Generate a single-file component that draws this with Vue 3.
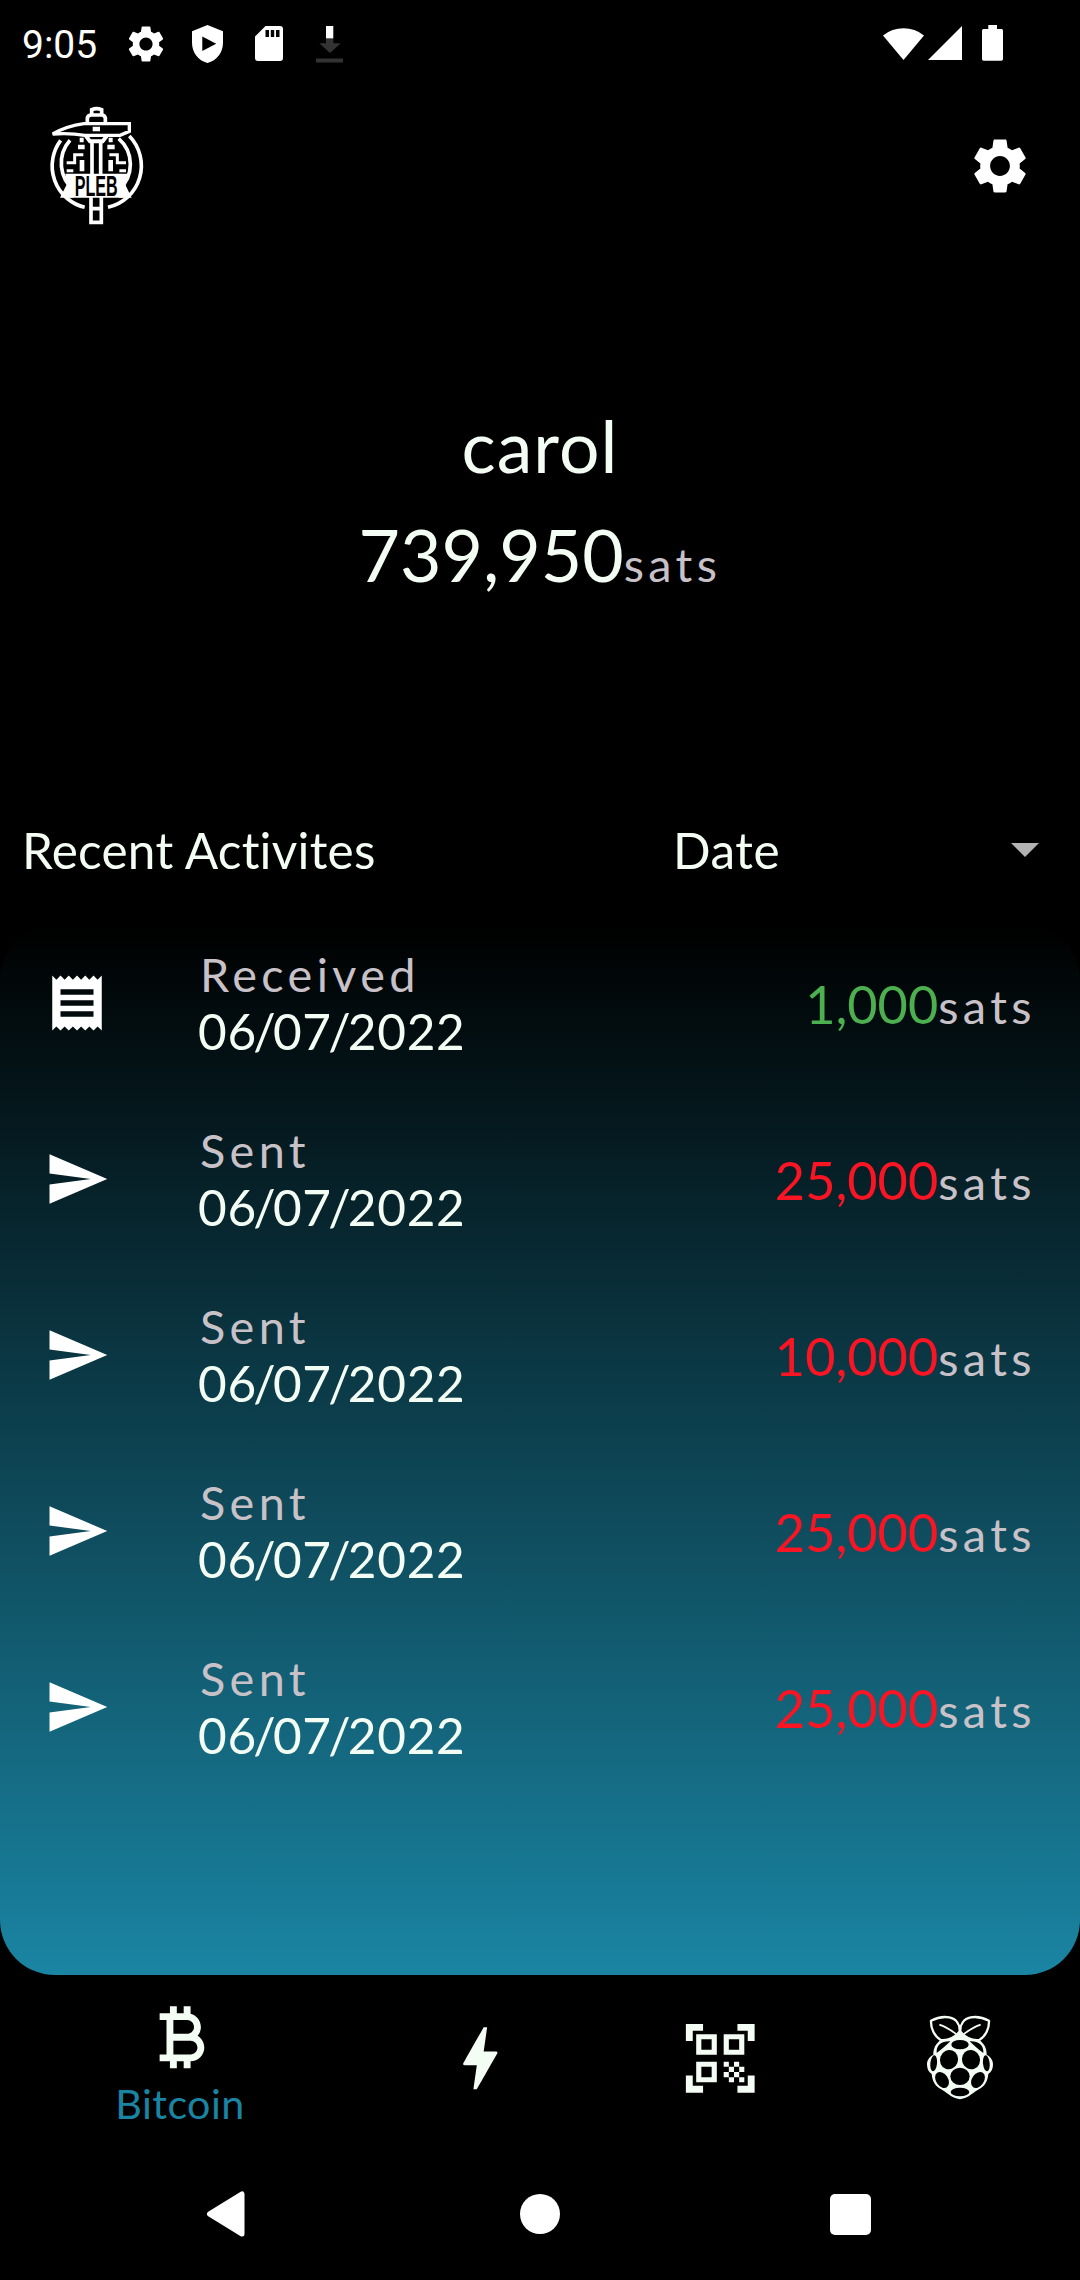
<script setup>
const activities = [
  { type: 'Received', date: ['06', '07', '2022'], amount: '1,000' },
  { type: 'Sent', date: ['06', '07', '2022'], amount: '25,000' },
  { type: 'Sent', date: ['06', '07', '2022'], amount: '10,000' },
  { type: 'Sent', date: ['06', '07', '2022'], amount: '25,000' },
  { type: 'Sent', date: ['06', '07', '2022'], amount: '25,000' },
]

const gear =
  'M19.14 12.94c.04-.3.06-.61.06-.94 0-.32-.02-.64-.07-.94l2.03-1.58c.18-.14.23-.41.12-.61l-1.92-3.32c-.12-.22-.37-.29-.59-.22l-2.39.96c-.5-.38-1.03-.7-1.62-.94l-.36-2.54c-.04-.24-.24-.41-.48-.41h-3.84c-.24 0-.43.17-.47.41l-.36 2.54c-.59.24-1.13.57-1.62.94l-2.39-.96c-.22-.08-.47 0-.59.22L2.74 8.87c-.12.21-.08.47.12.61l2.03 1.58c-.05.3-.09.63-.09.94s.02.64.07.94l-2.03 1.58c-.18.14-.23.41-.12.61l1.92 3.32c.12.22.37.29.59.22l2.39-.96c.5.38 1.03.7 1.62.94l.36 2.54c.05.24.24.41.48.41h3.84c.24 0 .44-.17.47-.41l.36-2.54c.59-.24 1.13-.56 1.62-.94l2.39.96c.22.08.47 0 .59-.22l1.92-3.32c.12-.22.07-.47-.12-.61l-2.01-1.58zM12 15.6c-1.98 0-3.6-1.62-3.6-3.6s1.62-3.6 3.6-3.6 3.6 1.62 3.6 3.6-1.62 3.6-3.6 3.6z'
</script>

<template>
  <div class="phone">
    <div class="status">
      <span class="clock">9:05</span>
      <svg class="st-gear" viewBox="0 0 24 24"><path :d="gear" /></svg>
      <svg class="st-shield" viewBox="0 0 31 38">
        <path fill-rule="evenodd" d="M15.5 0 31 6.3V17.5C31 27.5 25 35.5 15.5 38 6 35.5 0 27.5 0 17.5V6.3ZM10.3 11.5V26L24.2 18.8Z" />
      </svg>
      <svg class="st-sd" viewBox="0 0 28 35">
        <path fill-rule="evenodd" d="M10.5 0H25a3 3 0 0 1 3 3V32a3 3 0 0 1-3 3H3a3 3 0 0 1-3-3V10.5ZM10.5 4V11H14V4ZM15.8 4V11H19.2V4ZM21 4V11H24.5V4Z" />
      </svg>
      <svg class="st-down" viewBox="0 0 27 37">
        <path fill="#333" d="M10 12H17.3V17.3H24.7L14 27 3.3 17.3H10ZM0 32.5H27V36.5H0Z" />
        <path d="M10 0H17.3V12.3H10Z" />
      </svg>
      <span class="grow"></span>
      <svg class="st-wifi" viewBox="0 0 41 34"><path d="M0 9.5A33 33 0 0 1 41 9.5L20.5 34Z" /></svg>
      <svg class="st-cell" viewBox="0 0 34 34"><path d="M0 34H34V0Z" /></svg>
      <svg class="st-batt" viewBox="0 0 21 36">
        <path d="M6.3 0H15V4H19.5A1.5 1.5 0 0 1 21 5.5V34A1.7 1.7 0 0 1 19.3 35.7H1.7A1.7 1.7 0 0 1 0 34V5.5A1.5 1.5 0 0 1 1.5 4H6.3Z" />
      </svg>
    </div>

    <header class="header">
      <svg class="logo" viewBox="0 0 330 390">
        <g fill="none" stroke="#fff" stroke-width="11">
          <path d="M62 121A128 128 0 0 0 134 322" />
          <path d="M268 108A128 128 0 0 1 204 322" />
          <path d="M90 121A104 104 0 0 0 104 272" />
          <path d="M236 116A102 102 0 0 1 236 270" />
          <path d="M155 44V29Q170 23 185 29V44" />
          <path d="M142 66V54Q144 45 154 45H184Q194 45 196 54V66" />
          <path d="M38 102Q80 78 132 71H268V94L240 106H134Q90 98 38 102Z" stroke-width="10" />
          <path d="M138 108L150 124H188L200 108" stroke-width="12" />
          <path d="M156 126V228M182 126V228" />
          <path d="M153 290V367H184V290M153 326H184" />
          <path d="M130 164H104V188H80M80 212H100" stroke-width="9" />
          <path d="M208 164H232V188H258M258 212H238" stroke-width="9" />
          <path d="M126 180V214M212 180V214" stroke-width="14" />
          <path d="M114 141H134M202 141H224" stroke-width="13" />
          <path d="M119 120H131M206 120H218M158 87H180" stroke-width="13" />
        </g>
        <path fill="#fff" d="M76 221H262L250 293H88Z" />
        <path fill="#fff" d="M84 246L100 293H60ZM252 246L236 293H275Z" />
        <text transform="translate(104 289) scale(.62 1)" textLength="208" lengthAdjust="spacingAndGlyphs">PLEB</text>
      </svg>
      <svg class="settings" viewBox="0 0 24 24"><path :d="gear" /></svg>
    </header>

    <section class="account">
      <div class="name">carol</div>
      <div class="balance"><span>739,950</span><span class="unit">sats</span></div>
    </section>

    <div class="list-head">
      <span class="title">Recent Activites</span>
      <span class="sort">Date</span>
      <svg class="caret" viewBox="0 0 28 14"><path d="M0 0H28L14 14Z" /></svg>
    </div>

    <section class="panel">
      <div v-for="(item, i) in activities" :key="i" class="row">
        <svg class="row-icon" viewBox="0 0 24 24">
          <path v-if="item.type === 'Received'" d="M18 17H6v-2h12v2zm0-4H6v-2h12v2zm0-4H6V7h12v2zM3 22l1.5-1.5L6 22l1.5-1.5L9 22l1.5-1.5L12 22l1.5-1.5L15 22l1.5-1.5L18 22l1.5-1.5L21 22V2l-1.5 1.5L18 2l-1.5 1.5L15 2l-1.5 1.5L12 2l-1.5 1.5L9 2 7.5 3.5 6 2 4.5 3.5 3 2v20z" />
          <path v-else d="M2.01 21L23 12 2.01 3 2 10l15 2-15 2z" />
        </svg>
        <div class="info">
          <div class="type">{{ item.type }}</div>
          <div class="date">{{ item.date[0] }}<span class="slash">/</span>{{ item.date[1] }}<span class="slash">/</span>{{ item.date[2] }}</div>
        </div>
        <div class="amount" :class="item.type === 'Received' ? 'in' : 'out'">
          <span>{{ item.amount }}</span><span class="unit">sats</span>
        </div>
      </div>
    </section>

    <nav class="tabs">
      <div class="tab active">
        <svg viewBox="0 0 24 24">
          <path d="M17.06 11.57C17.65 10.88 18 9.98 18 9c0-1.86-1.27-3.43-3-3.87V3h-2v2h-2V3H9v2H6v2h2v10H6v2h3v2h2v-2h2v2h2v-2c2.21 0 4-1.79 4-4 0-1.45-.78-2.73-1.94-3.43zM10 7h4c1.1 0 2 .9 2 2s-.9 2-2 2h-4V7zm5 10h-5v-4h5c1.1 0 2 .9 2 2s-.9 2-2 2z" />
        </svg>
        <span>Bitcoin</span>
      </div>
      <div class="tab">
        <svg viewBox="0 0 24 24">
          <path d="M11 21h-1l1-7H7.5c-.58 0-.57-.32-.38-.66.19-.34.05-.08.07-.12C8.48 10.94 10.42 7.54 13 3h1l-1 7h3.5c.49 0 .56.33.47.51l-.07.15C12.96 17.55 11 21 11 21z" />
        </svg>
      </div>
      <div class="tab">
        <svg viewBox="0 0 24 24">
          <path fill-rule="evenodd" d="M5 5h6v6H5zM6.5 6.5v3h3v-3zM5 13h6v6H5zM6.5 14.5v3h3v-3zM13 5h6v6h-6zM14.5 6.5v3h3v-3zM13 13h1.5v1.5H13zM14.5 14.5H16V16h-1.5zM16 13h1.5v1.5H16zM13 16h1.5v1.5H13zM14.5 17.5H16V19h-1.5zM16 16h1.5v1.5H16zM17.5 14.5H19V16h-1.5zM17.5 17.5H19V19h-1.5zM22 7h-2V4h-3V2h5zM22 22v-5h-2v3h-3v2zM2 22h5v-2H4v-3H2zM2 2v5h2V4h3V2z" />
        </svg>
      </div>
      <div class="tab">
        <svg class="berry" viewBox="795 70 210 262">
          <path d="M900 118C886 134 862 147 842 148C826 160 820 174 820 192C806 200 801 210 801 222C801 234 806 244 815 250C817 270 824 284 838 293C860 304 872 322 900 326C928 322 940 304 962 293C976 284 983 270 985 250C994 244 999 234 999 222C999 210 994 200 980 192C980 174 974 160 958 148C938 147 914 134 900 118Z" />
          <g class="leaf">
            <path d="M899 122C900 100 888 84 868 80C850 77 828 82 813 90C812 112 822 136 842 148C862 150 884 142 899 122Z" />
            <path d="M901 122C900 100 912 84 932 80C950 77 972 82 987 90C988 112 978 136 958 148C938 150 916 142 901 122Z" />
          </g>
          <path class="vein" d="M838 102Q862 110 888 130M962 102Q938 110 912 130" />
          <g class="seeds">
            <ellipse cx="900" cy="162" rx="26" ry="14" />
            <path d="M830 187C828 164 844 151 871 152C860 162 846 176 830 187ZM970 187C972 164 956 151 929 152C940 162 954 176 970 187Z" />
            <ellipse cx="867" cy="207" rx="27" ry="29" transform="rotate(20 867 207)" />
            <ellipse cx="933" cy="207" rx="27" ry="29" transform="rotate(-20 933 207)" />
            <ellipse cx="900" cy="257" rx="29" ry="26" />
            <ellipse cx="821" cy="218" rx="10" ry="24" transform="rotate(6 821 218)" />
            <ellipse cx="979" cy="218" rx="10" ry="24" transform="rotate(-6 979 218)" />
            <ellipse cx="846" cy="268" rx="18" ry="26" transform="rotate(-34 846 268)" />
            <ellipse cx="954" cy="268" rx="18" ry="26" transform="rotate(34 954 268)" />
            <ellipse cx="900" cy="304" rx="28" ry="13" />
          </g>
        </svg>
      </div>
    </nav>

    <div class="sysnav">
      <svg class="back" viewBox="0 0 39 46"><path d="M36 3V43L3.5 23Z" stroke="#fff" stroke-width="5" stroke-linejoin="round" /></svg>
      <span class="home"></span>
      <span class="recents"></span>
    </div>
  </div>
</template>

<style>
body {
  background: #000;
}
</style>

<style scoped>
.phone {
  width: 1080px;
  height: 2280px;
  display: flex;
  flex-direction: column;
  background: #000;
  color: #f3fdf3;
  font-family: Lato, 'Liberation Sans', sans-serif;
  font-variant-ligatures: none;
  overflow: hidden;
}
svg {
  display: block;
  flex: none;
  fill: #fff;
}
.grow {
  flex: 1;
}

.status {
  height: 84px;
  display: flex;
  align-items: flex-start;
  padding: 0 77px 0 22px;
}
.clock {
  font-family: Roboto, sans-serif;
  font-size: 39px;
  line-height: 46px;
  margin-top: 21.5px;
  width: 102px;
  color: #fff;
}
.st-gear { width: 44px; height: 44px; margin-top: 21.5px; }
.st-shield { width: 31px; height: 38px; margin: 24.5px 0 0 24px; }
.st-sd { width: 28px; height: 35px; margin: 26px 0 0 31.5px; }
.st-down { width: 27px; height: 37px; margin: 25.5px 0 0 33.5px; }
.st-wifi { width: 41px; height: 34px; margin-top: 25.5px; }
.st-cell { width: 34px; height: 34px; margin: 25.5px 0 0 4px; }
.st-batt { width: 21px; height: 36px; margin: 25px 0 0 20px; }

.header {
  height: 164px;
  display: flex;
  justify-content: space-between;
  align-items: center;
  padding: 0 47px 0 40px;
}
.logo {
  width: 110px;
  height: 130px;
  margin-bottom: 2px;
}
.logo text {
  font-family: 'Liberation Sans', sans-serif;
  font-weight: 700;
  font-size: 89px;
  fill: #000;
}
.settings {
  width: 66px;
  height: 66px;
}

.account {
  height: 418px;
  margin-top: 154px;
  display: flex;
  flex-direction: column;
  align-items: center;
  gap: 23px;
  font-size: 71.5px;
  line-height: 86px;
}
.name {
  letter-spacing: 1.1px;
}
.balance,
.amount {
  display: flex;
  align-items: baseline;
}
.unit {
  font-size: 46.75px;
  letter-spacing: 4.4px;
  color: #c8c2c8;
}

.list-head {
  height: 105px;
  display: flex;
  padding: 0 41px 0 22px;
  font-size: 49.5px;
  line-height: 60px;
}
.title {
  width: 651px;
  letter-spacing: 0.25px;
}
.sort {
  flex: 1;
  letter-spacing: 0.5px;
}
.caret {
  width: 28px;
  height: 14px;
  margin-top: 23px;
  fill: #b3b3b3;
}

.panel {
  height: 1049.5px;
  display: flex;
  flex-direction: column;
  gap: 20px;
  border-radius: 55px;
  background: linear-gradient(#000, #1a85a3);
}
.row {
  height: 156px;
  display: flex;
  align-items: flex-start;
  padding: 0 44px;
}
.row-icon {
  width: 66px;
  height: 66px;
  margin-top: 45px;
}
.info {
  flex: 1;
  margin: 23px 0 0 88px;
}
.type {
  padding-left: 2px;
  font-size: 46.75px;
  line-height: 53px;
  letter-spacing: 4.4px;
  color: #c8c2c8;
}
.date {
  font-size: 49.5px;
  line-height: 60px;
  letter-spacing: 0.7px;
}
.slash {
  margin: 0 -3.5px;
}
.amount {
  margin-top: 48px;
  font-size: 52.25px;
  line-height: 62px;
}
.in {
  color: #4caf50;
}
.out {
  color: #f91524;
}

.tabs {
  height: 173.5px;
  display: flex;
}
.tab {
  flex: none;
  width: 240px;
  display: flex;
  flex-direction: column;
  align-items: center;
}
.tab svg {
  width: 82.5px;
  height: 82.5px;
  margin-top: 42px;
  fill: #f3fdf3;
}
.tab.active {
  width: 360px;
}
.tab.active svg {
  margin-top: 21px;
}
.tab span {
  font-size: 41.25px;
  line-height: 48px;
  margin-top: 1px;
  letter-spacing: 0.4px;
  color: #1a85a3;
}
.tab svg.berry {
  width: 70px;
  height: 87.3px;
  margin-top: 39px;
}
.leaf path {
  fill: #000;
  stroke: #f3fdf3;
  stroke-width: 7;
  stroke-linejoin: round;
}
.vein {
  fill: none;
  stroke: #f3fdf3;
  stroke-width: 5;
}
.seeds {
  fill: #000;
}

.sysnav {
  height: 132px;
  display: flex;
  align-items: center;
  padding-left: 206px;
}
.back {
  width: 39px;
  height: 46px;
}
.home {
  width: 40px;
  height: 40px;
  margin: 0 270px 0 275px;
  border-radius: 50%;
  background: #fff;
}
.recents {
  width: 41px;
  height: 41px;
  border-radius: 5px;
  background: #fff;
}
</style>
